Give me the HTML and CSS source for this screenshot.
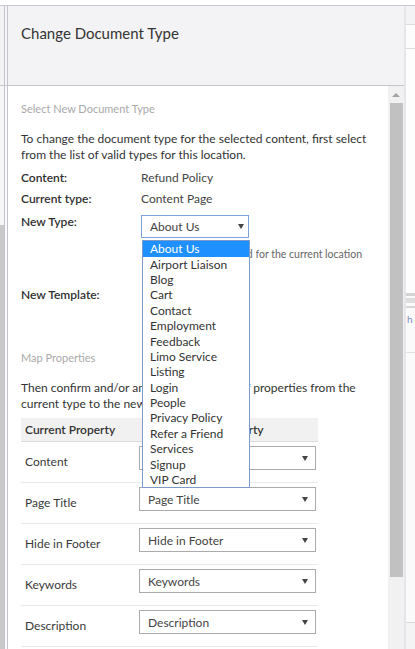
FILE: index.html
```html
<!DOCTYPE html>
<html>
<head>
<meta charset="utf-8">
<title>Change Document Type</title>
<link rel="stylesheet" href="styles.css">
</head>
<body>
<div class="topstrip"></div>
<div class="stage">
  <div class="leftrail">
    <div class="rail-fill"></div>
    <div class="rail-line"></div>
    <div class="rail-gap"></div>
    <div class="rail-line"></div>
  </div>
  <div class="modal">
    <div class="modal-header">
      <h1 class="modal-title">Change Document Type</h1>
    </div>
    <div class="modal-body">
      <div class="content">
        <h2 class="section-title">Select New Document Type</h2>
        <p class="intro">To change the document type for the selected content, first select from the list of valid types for this location.</p>
        <div class="form">
          <div class="label">Content:</div>
          <div class="value">Refund Policy</div>
          <div class="label">Current type:</div>
          <div class="value">Content Page</div>
          <div class="label label-type">New Type:</div>
          <div class="value">
            <div class="picker">
              <div class="select select-focus select-type">
                <span>About Us</span>
                <svg class="caret" width="6" height="5" viewBox="0 0 6 5"><polygon points="0,0 6,0 3,5"/></svg>
              </div>
              <ul class="options">
                <li class="active">About Us</li>
                <li>Airport Liaison</li>
                <li>Blog</li>
                <li>Cart</li>
                <li>Contact</li>
                <li>Employment</li>
                <li>Feedback</li>
                <li>Limo Service</li>
                <li>Listing</li>
                <li>Login</li>
                <li>People</li>
                <li>Privacy Policy</li>
                <li>Refer a Friend</li>
                <li>Services</li>
                <li>Signup</li>
                <li>VIP Card</li>
              </ul>
            </div>
            <div class="hint">Only types allowed for the current location</div>
          </div>
          <div class="label label-template">New Template:</div>
          <div class="value value-template"></div>
        </div>
        <h2 class="section-title section-map">Map Properties</h2>
        <p class="intro">Then confirm and/or amend the mapping of properties from the current type to the new one.</p>
        <table class="map-table">
          <colgroup>
            <col class="col-current">
            <col class="col-new">
          </colgroup>
          <thead>
            <tr><th class="th-current">Current Property</th><th class="th-new">New Property</th></tr>
          </thead>
          <tbody>
            <tr>
              <td class="prop-name">Content</td>
              <td><div class="select select-map"><span>Content</span><svg class="caret" width="6" height="5" viewBox="0 0 6 5"><polygon points="0,0 6,0 3,5"/></svg></div></td>
            </tr>
            <tr>
              <td class="prop-name">Page Title</td>
              <td><div class="select select-map"><span>Page Title</span><svg class="caret" width="6" height="5" viewBox="0 0 6 5"><polygon points="0,0 6,0 3,5"/></svg></div></td>
            </tr>
            <tr>
              <td class="prop-name">Hide in Footer</td>
              <td><div class="select select-map"><span>Hide in Footer</span><svg class="caret" width="6" height="5" viewBox="0 0 6 5"><polygon points="0,0 6,0 3,5"/></svg></div></td>
            </tr>
            <tr>
              <td class="prop-name">Keywords</td>
              <td><div class="select select-map"><span>Keywords</span><svg class="caret" width="6" height="5" viewBox="0 0 6 5"><polygon points="0,0 6,0 3,5"/></svg></div></td>
            </tr>
            <tr>
              <td class="prop-name">Description</td>
              <td><div class="select select-map"><span>Description</span><svg class="caret" width="6" height="5" viewBox="0 0 6 5"><polygon points="0,0 6,0 3,5"/></svg></div></td>
            </tr>
          </tbody>
        </table>
      </div>
      <div class="scrollbar">
        <div class="sb-button"><div class="sb-arrow"></div></div>
        <div class="sb-thumb"></div>
      </div>
    </div>
  </div>
  <div class="rightbg">
    <div class="rb rb-a"></div>
    <div class="rb rb-b"></div>
    <div class="rb rb-c"></div>
    <div class="rb rb-d"></div>
    <div class="rb rb-e"></div>
    <div class="rb rb-f"></div>
    <div class="rb rb-g"><span class="rb-text">h</span></div>
    <div class="rb rb-h"></div>
    <div class="rb rb-i"></div>
  </div>
</div>
</body>
</html>
```

FILE: styles.css
```css
html, body {
  margin: 0;
  padding: 0;
}

body {
  width: 415px;
  height: 649px;
  overflow: hidden;
  background: #ffffff;
  font-family: Lato, "Open Sans", "Liberation Sans", sans-serif;
  color: #333333;
}

.topstrip {
  height: 5px;
  background: #ffffff;
  border-bottom: 1px solid #c9c9d3;
}

.stage {
  display: flex;
  height: 643px;
}

/* left edge of the page behind the dialog */
.leftrail {
  width: 8px;
  display: flex;
  flex-shrink: 0;
}

.rail-fill {
  width: 4px;
  background: linear-gradient(to bottom, #f3f3f5 0, #f3f3f5 79px, #c5c5cd 79px, #c5c5cd 80px, #f6f6f6 80px, #f6f6f6 219px, #c9c9c9 219px);
}

.rail-gap {
  width: 2px;
  background: linear-gradient(to bottom, #f6f6f8 0, #f6f6f8 79px, #c5c5cd 79px, #c5c5cd 80px, #fbfbfb 80px);
}

.rail-line {
  width: 1px;
  background: #c3c3cf;
}

/* dialog */
.modal {
  width: 396px;
  flex-shrink: 0;
  display: flex;
  flex-direction: column;
  background: #ffffff;
}

.modal-header {
  height: 80px;
  box-sizing: border-box;
  padding: 18px 13px 0;
  background: #f3f3f5;
  border-bottom: 1px solid #c5c5cd;
}

.modal-title {
  margin: 0;
  font-size: 15px;
  font-weight: 400;
  line-height: 18px;
  color: #343434;
}

.modal-body {
  flex: 1;
  min-height: 0;
  display: flex;
}

.content {
  flex: 1;
  padding: 16px 13px 0;
  overflow: hidden;
}

.section-title {
  margin: 0;
  font-size: 11px;
  line-height: 13px;
  font-weight: 400;
  color: #a9a9a9;
}

.section-map {
  margin-top: 48px;
}

.intro {
  margin: 16px 0 0;
  font-size: 12px;
  line-height: 15.6px;
  color: #333333;
}

.form {
  margin-top: 8px;
  display: grid;
  grid-template-columns: 120px 1fr;
  row-gap: 5px;
  font-size: 12px;
  line-height: 16px;
}

.label {
  font-weight: 600;
  color: #2f2f2f;
}

.value {
  color: #444444;
}

.label-type {
  padding-top: 2px;
}

.label-template {
  margin-top: 21px;
}

.picker {
  position: relative;
  margin-top: 3px;
  width: 108px;
}

.select {
  display: flex;
  align-items: center;
  justify-content: space-between;
  box-sizing: border-box;
  border: 1px solid #ababab;
  background: #ffffff;
  font-size: 12px;
  color: #444444;
  padding: 0 7px 0 8px;
}

.select-type {
  height: 23px;
  width: 108px;
  padding-right: 4px;
}

.select-focus {
  border-color: #7fa3db;
}

.caret {
  display: block;
  fill: #444444;
}

.options {
  position: absolute;
  top: 25px;
  left: 1px;
  width: 108px;
  box-sizing: border-box;
  margin: 0;
  padding: 0;
  list-style: none;
  background: #ffffff;
  border: 1px solid #7e9acb;
  z-index: 5;
}

.options li {
  height: 15.4px;
  line-height: 15.4px;
  padding-left: 7px;
  font-size: 12px;
  color: #333333;
  white-space: nowrap;
}

.options li.active {
  background: #1e90ff;
  color: #ffffff;
}

.hint {
  margin-top: 10px;
  padding-right: 13px;
  font-size: 10.5px;
  line-height: 13px;
  color: #666666;
  white-space: nowrap;
  text-align: right;
}

/* property map table */
.map-table {
  margin-top: 7px;
  width: 297px;
  table-layout: fixed;
  border-collapse: collapse;
  font-size: 12px;
}

.col-current {
  width: 114px;
}

.col-new {
  width: 183px;
}

.map-table th {
  height: 23px;
  padding: 0 4px;
  font-weight: 600;
  color: #333333;
  background: #f1f1f1;
  border-bottom: 1px solid #dddddd;
  white-space: nowrap;
}

.th-current {
  text-align: left;
}

.th-new {
  text-align: center;
}

.map-table td {
  padding: 4px 4px 12px;
  vertical-align: top;
  border-bottom: 1px solid #eaeaea;
}

.map-table td.prop-name {
  padding-top: 12px;
  line-height: 16px;
  color: #3a3a3a;
}

.select-map {
  height: 24px;
  width: 177px;
}

/* scrollbar */
.scrollbar {
  width: 16px;
  flex-shrink: 0;
  background: #f1f1f1;
  display: flex;
  flex-direction: column;
}

.sb-button {
  height: 17px;
  display: flex;
  justify-content: center;
  align-items: center;
}

.sb-arrow {
  width: 0;
  height: 0;
  border-left: 4px solid transparent;
  border-right: 4px solid transparent;
  border-bottom: 4px solid #a3a3a3;
}

.sb-thumb {
  height: 474px;
  margin: 0 1px 0 2px;
  background: #c1c1c1;
}

/* page behind the dialog, right edge */
.rightbg {
  flex: 1;
  display: flex;
  flex-direction: column;
  border-left: 2px solid #e6e6ea;
  background: #fbfbfb;
}

.rb {
  flex-shrink: 0;
}

.rb-a {
  height: 18px;
  background: #f3f3f5;
  border-bottom: 1px solid #dcdce0;
}

.rb-b {
  height: 23px;
  background: #fcfcfc;
  border-bottom: 1px solid #dcdce0;
}

.rb-c {
  height: 244px;
  background: #fdfdfd;
}

.rb-d {
  height: 3px;
  background: #d3d3d3;
}

.rb-e {
  height: 2px;
  background: #fafafa;
  border-bottom: 5px solid #dedede;
}

.rb-f {
  height: 3px;
  background: #fafafa;
  border-bottom: 2px solid #d6d6d6;
}

.rb-g {
  height: 44px;
  background: #fafafa;
  border-bottom: 1px solid #e0e0e0;
  padding-left: 1px;
}

.rb-text {
  display: block;
  margin-top: 6px;
  font-size: 10px;
  line-height: 10px;
  color: #7c8fb8;
}

.rb-h {
  height: 269px;
  background: #fafafa;
  border-bottom: 1px solid #d8d8d8;
}

.rb-i {
  flex: 1;
  background: #f4f4f4;
}
```
